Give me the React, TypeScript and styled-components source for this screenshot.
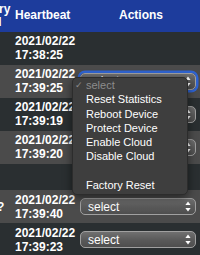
import React from "react";
import styled, { createGlobalStyle } from "styled-components";

const GlobalStyle = createGlobalStyle`
  html, body {
    margin: 0;
    padding: 0;
    background: #2a2f31;
  }
  body {
    font-family: "Liberation Sans", Arial, Helvetica, sans-serif;
  }
`;

const Page = styled.div`
  position: relative;
  width: 200px;
  height: 255px;
  overflow: hidden;
`;

const Table = styled.table`
  border-collapse: collapse;
  table-layout: fixed;
  width: 238px;
  margin-left: -38px;
  color: #fff;
  font-size: 12px;
  font-weight: 700;
`;

const HeadRow = styled.tr`
  background: #1d3c9c;
  height: 31.5px;
`;

const Th = styled.th<{ $align?: string }>`
  padding: 0 0 0 5px;
  text-align: ${(p) => p.$align || "left"};
  line-height: 13px;
  font-weight: 700;
`;

const Row = styled.tr<{ $light?: boolean; $empty?: boolean }>`
  background: ${(p) => (p.$light ? "#4b4b4b" : "#2a2f31")};
  height: ${(p) => (p.$empty ? "26.5px" : "33px")};
`;

const Td = styled.td`
  padding: 2.5px 0 2.5px 5px;
  line-height: 14px;
  vertical-align: middle;
  white-space: nowrap;
`;

const ActionTd = styled.td`
  padding: 0 4px 0 3px;
  vertical-align: middle;
`;

const SelectAnchor = styled.div`
  position: relative;
`;

const SelectBox = styled.div<{ $focused?: boolean }>`
  display: flex;
  align-items: center;
  justify-content: space-between;
  box-sizing: border-box;
  height: 17px;
  width: 116px;
  padding: 0 4px 0 7px;
  border: 1px solid #a0a0a0;
  border-radius: 5px;
  background: linear-gradient(#707070, #595959 55%, #4e4e4e);
  color: #fff;
  font-size: 12px;
  font-weight: 400;
  box-shadow: ${(p) => (p.$focused ? "0 0 0 2.5px #2f63cf" : "none")};
`;

const Popup = styled.div`
  position: absolute;
  left: -8px;
  top: 4.5px;
  width: 116px;
  box-sizing: border-box;
  padding: 0 0 2px;
  background: #3e3e3e;
  border: 1px solid #2c2c2c;
  border-radius: 5px;
  box-shadow: 0 3px 10px rgba(0, 0, 0, 0.5);
  z-index: 2;
`;

const Item = styled.div<{ $muted?: boolean }>`
  position: relative;
  height: 14.3px;
  line-height: 14.3px;
  padding-left: 13px;
  font-size: 11px;
  font-weight: 400;
  color: ${(p) => (p.$muted ? "#8c8c8c" : "#fff")};
  white-space: nowrap;
`;

const Check = styled.span`
  position: absolute;
  left: 2px;
  top: 0;
  color: #8c8c8c;
  font-family: "DejaVu Sans", sans-serif;
  font-size: 9px;
`;

const Arrows = () => (
  <svg width="6" height="11" viewBox="0 0 6 11">
    <path d="M3 0.5 L5.6 4 L0.4 4 Z" fill="#fff" />
    <path d="M3 10.5 L5.6 7 L0.4 7 Z" fill="#fff" />
  </svg>
);

type Entry = {
  lead?: string;
  date?: string;
  time?: string;
  open?: boolean;
  noAction?: boolean;
  empty?: boolean;
};

const rows: Entry[] = [
  { date: "2021/02/22", time: "17:38:25", noAction: true },
  { date: "2021/02/22", time: "17:39:25", open: true },
  { date: "2021/02/22", time: "17:39:19" },
  { date: "2021/02/22", time: "17:39:20" },
  { empty: true, noAction: true },
  { lead: "v1.20?", date: "2021/02/22", time: "17:39:40" },
  { date: "2021/02/22", time: "17:39:23" },
];

const options = [
  "Reset Statistics",
  "Reboot Device",
  "Protect Device",
  "Enable Cloud",
  "Disable Cloud",
  "",
  "Factory Reset",
];

export default function App() {
  return (
    <Page>
      <GlobalStyle />
      <Table>
        <colgroup>
          <col style={{ width: 48 }} />
          <col style={{ width: 67 }} />
          <col style={{ width: 123 }} />
        </colgroup>
        <thead>
          <HeadRow>
            <Th>
              Factory
              <br />
              Model
            </Th>
            <Th>Heartbeat</Th>
            <Th $align="center">Actions</Th>
          </HeadRow>
        </thead>
        <tbody>
          {rows.map((r, i) => (
            <Row key={i} $light={i % 2 === 1} $empty={r.empty}>
              <Td>{r.lead}</Td>
              <Td>
                {r.date}
                {r.date && <br />}
                {r.time}
              </Td>
              <ActionTd>
                {!r.noAction && (
                  <SelectAnchor>
                    <SelectBox $focused={r.open}>
                      <span>select</span>
                      <Arrows />
                    </SelectBox>
                    {r.open && (
                      <Popup>
                        <Item $muted>
                          <Check>✓</Check>select
                        </Item>
                        {options.map((o, j) => (
                          <Item key={j}>{o}</Item>
                        ))}
                      </Popup>
                    )}
                  </SelectAnchor>
                )}
              </ActionTd>
            </Row>
          ))}
        </tbody>
      </Table>
    </Page>
  );
}
